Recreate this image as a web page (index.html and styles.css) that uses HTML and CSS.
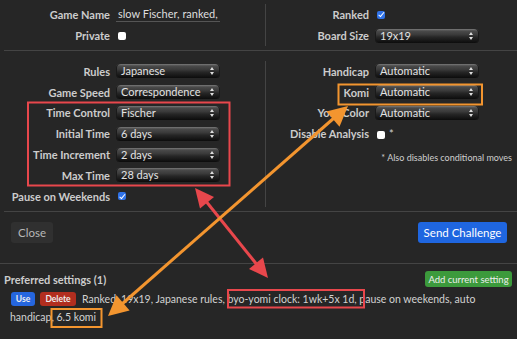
FILE: index.html
```html
<!DOCTYPE html>
<html lang="en">
<head>
    <meta charset="UTF-8">
    <title>Challenge</title>
    <link rel="stylesheet" href="styles.css">
</head>
<body>

    <div class="dialog">
        <div class="section top">
            <div class="col left">
                <div class="row"><span class="label">Game Name</span><div class="input">slow Fischer, ranked,</div></div>
                <div class="row"><span class="label">Private</span><span class="check"></span></div>
            </div>
            <div class="col right">
                <div class="row"><span class="label">Ranked</span><span class="check on"></span></div>
                <div class="row"><span class="label">Board Size</span><div class="select">19x19</div></div>
            </div>
        </div>

        <div class="section middle">
            <div class="col left">
                <div class="row"><span class="label">Rules</span><div class="select">Japanese</div></div>
                <div class="row"><span class="label">Game Speed</span><div class="select">Correspondence</div></div>
                <div class="row"><span class="label">Time Control</span><div class="select">Fischer</div></div>
                <div class="row"><span class="label">Initial Time</span><div class="select">6 days</div></div>
                <div class="row"><span class="label">Time Increment</span><div class="select">2 days</div></div>
                <div class="row"><span class="label">Max Time</span><div class="select">28 days</div></div>
                <div class="row"><span class="label">Pause on Weekends</span><span class="check on"></span></div>
            </div>
            <div class="col right">
                <div class="row"><span class="label">Handicap</span><div class="select">Automatic</div></div>
                <div class="row"><span class="label">Komi</span><div class="select">Automatic</div></div>
                <div class="row"><span class="label">Your Color</span><div class="select">Automatic</div></div>
                <div class="row"><span class="label">Disable Analysis</span><span class="check-star"><span class="check"></span>*</span></div>
                <div class="note">* Also disables conditional moves</div>
            </div>
        </div>

        <div class="section buttons">
            <button class="btn close">Close</button>
            <button class="btn primary">Send Challenge</button>
        </div>

        <div class="section preferred">
            <div class="pref-head">
                <span class="pref-title">Preferred settings (1)</span>
                <button class="btn add">Add current setting</button>
            </div>
            <div class="pref-item">
                <button class="mini use">Use</button><button class="mini delete">Delete</button><span class="pref-text">Ranked, 19x19, Japanese rules, byo-yomi clock: 1wk+5x 1d, pause on weekends, auto handicap, 6.5 komi</span>
            </div>
        </div>
    </div>

    <!-- annotation overlay -->
    <svg class="marks" width="517" height="339" viewBox="0 0 517 339">
        <g fill="none" stroke-width="2">
            <rect x="28" y="102.5" width="201.5" height="83" stroke="#e8474c"/>
            <rect x="228" y="290" width="136" height="17.5" stroke="#e8474c"/>
            <rect x="338.5" y="84.5" width="143.5" height="20" stroke="#f3952f"/>
            <rect x="51.5" y="309" width="50" height="18" stroke="#f3952f"/>
        </g>
        <line x1="205" y1="200" x2="258" y2="266" stroke="#e8474c" stroke-width="3"/>
        <polygon points="195,188 200,208.5 214,197.1" fill="#e8474c"/>
        <polygon points="268,278 249,268.9 263,257.5" fill="#e8474c"/>
        <line x1="334" y1="118" x2="122" y2="304" stroke="#f3952f" stroke-width="3"/>
        <polygon points="348,106 326.4,111.6 339.5,126.7" fill="#f3952f"/>
        <polygon points="108,316 116.5,295.3 129.6,310.4" fill="#f3952f"/>
    </svg>

</body>
</html>
```

FILE: styles.css
```css
body {
    margin: 0;
    width: 517px;
    height: 339px;
    overflow: hidden;
    background-color: #262626;
    color: #cfcfcf;
    font-family: 'Lato', sans-serif;
    font-size: 11px;
    position: relative;
}

.section {
    border-bottom: 1px solid #444;
}

.top,
.middle {
    display: grid;
    grid-template-columns: 262px 1fr;
    margin-left: 4px;
}

.top {
    padding: 4px 0 4px;
}

.middle {
    padding: 10px 0 4px;
}

.col.left {
    margin-left: -4px;
    border-right: 1px solid #444;
}

.row {
    display: grid;
    align-items: center;
    height: 21px;
}

.left .row {
    grid-template-columns: 110px 104px;
    column-gap: 6px;
}

.right .row {
    grid-template-columns: 103px 104px;
    column-gap: 6px;
}

.middle .row {
    height: 20.8px;
}

.label {
    display: flex;
    justify-content: flex-end;
    white-space: nowrap;
    font-weight: 700;
    font-size: 11px;
    color: #cccccc;
}

.input {
    height: 14px;
    padding: 0 2px;
    border-bottom: 1px solid #555;
    color: #dedede;
    font-size: 11px;
    white-space: nowrap;
    overflow: hidden;
}

.select {
    position: relative;
    height: 14px;
    line-height: 14px;
    padding-left: 5px;
    border-radius: 4px;
    color: #e2e2e2;
    font-size: 11px;
    background: linear-gradient(#7a7a7a 0%, #4a4a4a 14%, #3a3a3a 40%, #262626 58%, #0c0c0c 100%);
    box-shadow: inset 1px 0 0 #1a1a1a, inset -1px 0 0 #1a1a1a;
}

.select::before,
.select::after {
    content: "";
    position: absolute;
    right: 6px;
    width: 0;
    height: 0;
    border-left: 2.5px solid transparent;
    border-right: 2.5px solid transparent;
}

.select::before {
    top: 3px;
    border-bottom: 3px solid #ddd;
}

.select::after {
    top: 8px;
    border-top: 3px solid #ddd;
}

.check {
    display: inline-block;
    width: 8px;
    height: 8px;
    margin-left: 2px;
    border-radius: 2px;
    background: #fff;
    position: relative;
}

.check.on {
    background: #2f72e8;
}

.check.on::after {
    content: "";
    position: absolute;
    left: 2.5px;
    top: 0.5px;
    width: 2px;
    height: 4.5px;
    border: solid #fff;
    border-width: 0 1.5px 1.5px 0;
    transform: rotate(40deg);
}

.check-star {
    display: flex;
    align-items: flex-start;
    gap: 4px;
    font-size: 11px;
    line-height: 10px;
}

.check-star .check {
    margin-top: 2px;
}

.note {
    text-align: right;
    padding: 8px 5px 0 0;
    font-size: 9px;
    color: #cfcfcf;
}

.buttons {
    display: flex;
    justify-content: space-between;
    padding: 10px 10px 20px 11px;
}

.btn {
    font-family: inherit;
    border: none;
    border-radius: 3px;
    padding: 0;
    white-space: nowrap;
    cursor: pointer;
}

.close {
    height: 21px;
    width: 42px;
    background: #303030;
    color: #b8b8b8;
    font-size: 11.5px;
}

.primary {
    height: 21px;
    width: 89px;
    background: #1f66e0;
    color: #fff;
    font-size: 11.5px;
}

.preferred {
    border-bottom: none;
    padding: 7px 5px 0 4px;
}

.pref-head {
    display: flex;
    justify-content: space-between;
    align-items: center;
    height: 17px;
}

.pref-title {
    font-weight: 700;
    font-size: 11px;
    color: #cccccc;
}

.add {
    height: 16px;
    width: 87px;
    background: #3c9a3c;
    color: #eee;
    font-size: 9.5px;
}

.pref-item {
    padding: 2px 0 0 6px;
    font-size: 10.5px;
    line-height: 18px;
    color: #d2d2d2;
}

.mini {
    font-family: inherit;
    border: none;
    border-radius: 3px;
    height: 14px;
    line-height: 14px;
    padding: 0;
    font-size: 8.5px;
    font-weight: 700;
    color: #eee;
    vertical-align: 1px;
}

.use {
    width: 24px;
    background: #2566de;
    margin-left: 1px;
}

.delete {
    width: 36px;
    background: #b22e1f;
    margin-left: 5px;
    margin-right: 6px;
}

.marks {
    position: absolute;
    left: 0;
    top: 0;
    pointer-events: none;
}
```
